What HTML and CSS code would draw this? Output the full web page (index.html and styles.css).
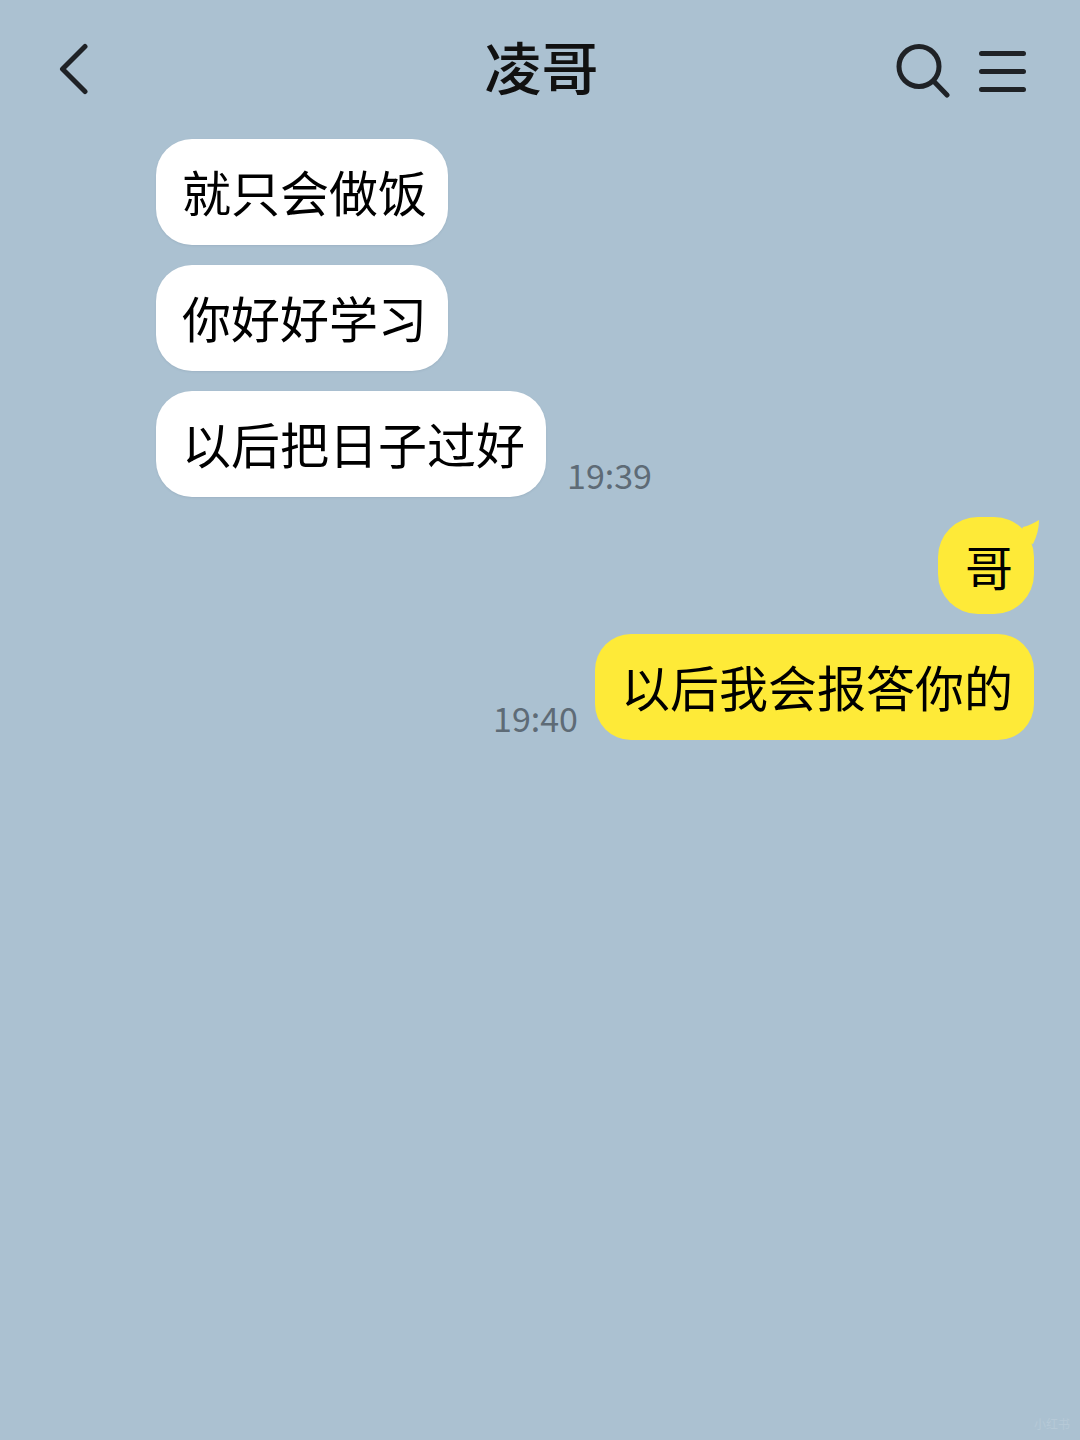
FILE: index.html
```html
<!DOCTYPE html>
<html>
<head>
    <title>凌哥</title>
    <meta name="viewport" content="width=device-width, initial-scale=1.0">
    <link rel="stylesheet" href="styles.css">
</head>
<body>
    <div class="header">
        <svg class="icon-back" width="32" height="54" viewBox="0 0 32 54">
            <path d="M27 3.5 L4.5 26 L27 48.5" />
        </svg>
        <h1 class="title">凌哥</h1>
        <div class="header-actions">
            <svg class="icon-search" width="56" height="56" viewBox="0 0 56 56">
                <circle cx="25" cy="24.5" r="20" />
                <path d="M39.5 39 L53 53" />
            </svg>
            <svg class="icon-menu" width="50" height="46" viewBox="0 0 50 46">
                <path d="M3.5 6.5 H45.5 M3.5 24.5 H45.5 M3.5 42.5 H45.5" />
            </svg>
        </div>
    </div>

    <div class="messages">
        <div class="group group-in">
            <div class="row"><div class="bubble bubble-in">就只会做饭</div></div>
            <div class="row"><div class="bubble bubble-in">你好好学习</div></div>
            <div class="row">
                <div class="bubble bubble-in">以后把日子过好</div>
                <span class="time">19:39</span>
            </div>
        </div>
        <div class="group group-out">
            <div class="row">
                <div class="bubble bubble-out bubble-tail">哥
                    <svg class="tail" width="28" height="26" viewBox="0 0 28 26">
                        <path d="M11 7 C16 6 22 3 27 0 C27 8 25 16 21 24 L5 20 Z" />
                    </svg>
                </div>
            </div>
            <div class="row">
                <span class="time">19:40</span>
                <div class="bubble bubble-out">以后我会报答你的</div>
            </div>
        </div>
    </div>

    <div class="watermark">小红书</div>
</body>
</html>
```

FILE: styles.css
```css
body {
    font-family: "Noto Sans CJK SC", "Liberation Sans", sans-serif;
    background-color: #abc1d1;
    margin: 0;
    height: 1440px;
    overflow: hidden;
    color: #000;
    position: relative;
}

.header {
    display: grid;
    grid-template-columns: 1fr auto 1fr;
    align-items: center;
    height: 139px;
    padding: 0 52px 0 58px;
    box-sizing: border-box;
}

.header svg {
    fill: none;
    stroke: #1f2226;
    stroke-linecap: round;
    stroke-linejoin: round;
    stroke-width: 5;
}

.title {
    margin: 0 3px 8px 0;
    font-size: 57px;
    font-weight: 500;
    line-height: 1;
    color: #111;
}

.header-actions {
    display: flex;
    align-items: center;
    gap: 28px;
    justify-self: end;
}

.messages {
    display: flex;
    flex-direction: column;
    gap: 20px;
}

.group {
    display: flex;
    flex-direction: column;
    gap: 20px;
}

.group-in {
    padding-left: 156px;
}

.group-out {
    align-items: flex-end;
    padding-right: 46px;
}

.row {
    display: flex;
    align-items: flex-end;
    gap: 21px;
}

.bubble {
    position: relative;
    height: 106px;
    padding: 0 21px 0 26px;
    box-sizing: border-box;
    border-radius: 36px;
    font-size: 49px;
    line-height: 104px;
    white-space: nowrap;
    flex-shrink: 0;
}

.bubble-in {
    background-color: #fff;
    box-shadow: 0 1px 2px rgba(90, 110, 130, 0.15);
}

.bubble-out {
    background-color: #feea38;
}

.bubble-tail {
    height: 97px;
    width: 96px;
    line-height: 97px;
    padding: 0 0 0 27px;
    font-size: 48px;
    border-radius: 40px;
}

.tail {
    position: absolute;
    top: 3px;
    right: -6px;
    fill: #feea38;
}

.time {
    font-size: 34px;
    line-height: 1;
    color: #5e6b76;
    padding-bottom: 5px;
}

.group-out .row {
    gap: 17px;
}

.watermark {
    position: absolute;
    right: 10px;
    bottom: 10px;
    font-size: 12px;
    line-height: 1;
    color: #b6c9d7;
}
```
